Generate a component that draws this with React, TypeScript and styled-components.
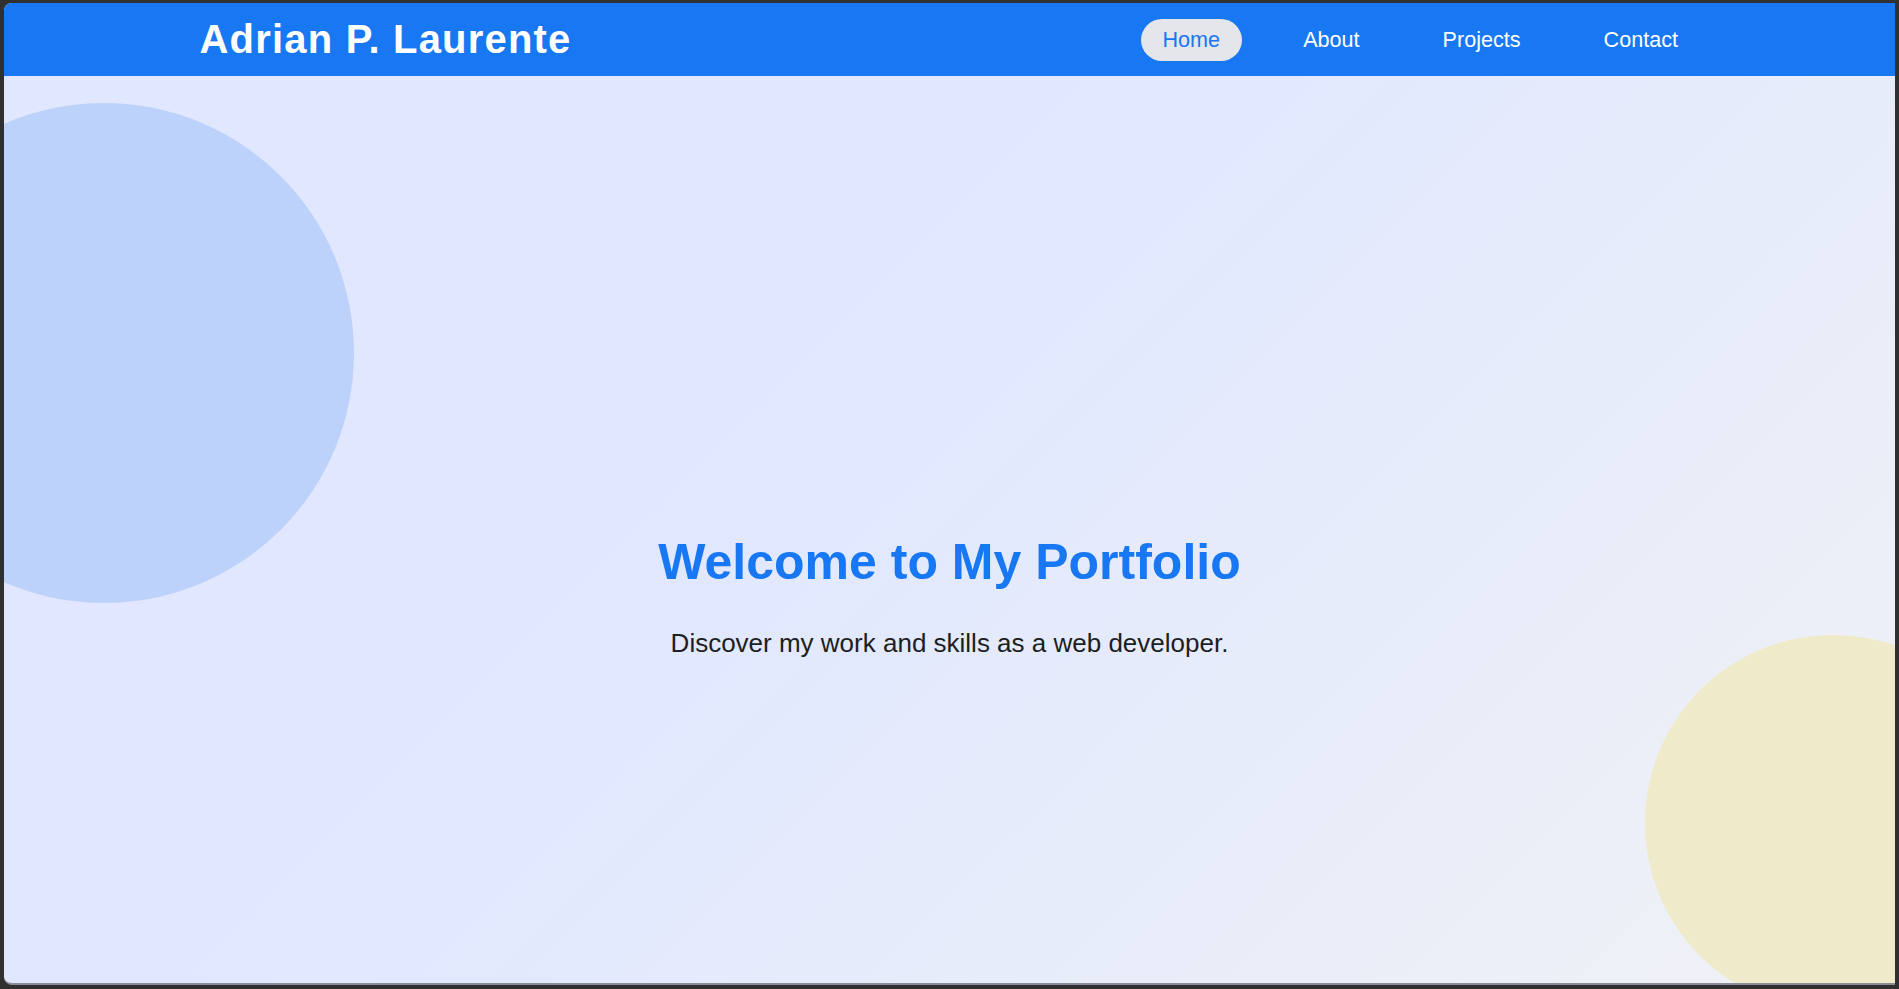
import React from "react";
import styled, { createGlobalStyle } from "styled-components";

const GlobalStyle = createGlobalStyle`
  html, body {
    margin: 0;
    padding: 0;
    background: #303030;
  }
  * { box-sizing: border-box; }
`;

const Frame = styled.div`
  height: 989px;
  padding: 3px 4px 4px 4px;
  display: flex;
  flex-direction: column;
  font-family: "Liberation Sans", Arial, sans-serif;
`;

const Window = styled.div`
  position: relative;
  flex: 1;
  display: flex;
  flex-direction: column;
  overflow: hidden;
  border-radius: 8px 0 0 8px;
  border-bottom: 2px solid #8a8c96;
  background: linear-gradient(135deg, #e0e7ff 0%, #e0e7ff 40%, #f0f2f5 100%);
`;

const Header = styled.header`
  position: relative;
  z-index: 2;
  height: 73px;
  flex: 0 0 73px;
  background: #1877f2;
  display: flex;
  align-items: center;
`;

const HeaderInner = styled.div`
  width: 100%;
  max-width: 1500px;
  margin: 0 auto;
  display: flex;
  align-items: center;
  justify-content: space-between;
`;

const Logo = styled.div`
  color: #ffffff;
  font-weight: 700;
  font-size: 40px;
  letter-spacing: 1.2px;
  line-height: normal;
`;

const Nav = styled.nav`
  display: flex;
  align-items: center;
  gap: 40px;
`;

const NavLink = styled.a<{ $active?: boolean }>`
  display: block;
  font-size: 21.6px;
  line-height: 24px;
  padding: 9px 21.5px;
  border-radius: 22px;
  text-decoration: none;
  cursor: pointer;
  color: ${(p) => (p.$active ? "#1877f2" : "#ffffff")};
  background: ${(p) => (p.$active ? "#e4e6eb" : "transparent")};
`;

const Circle = styled.div<{ $size: number; $color: string }>`
  position: absolute;
  width: ${(p) => p.$size}px;
  height: ${(p) => p.$size}px;
  border-radius: 50%;
  background: ${(p) => p.$color};
  z-index: 0;
`;

const BlueCircle = styled(Circle)`
  left: -150px;
  top: 100px;
`;

const YellowCircle = styled(Circle)`
  left: 1641px;
  top: 632px;
`;

const Hero = styled.section`
  position: relative;
  z-index: 1;
  flex: 1;
  display: flex;
  flex-direction: column;
  align-items: center;
  justify-content: center;
  padding-top: 133px;
  text-align: center;
`;

const Title = styled.h1`
  margin: 0 0 37px;
  font-size: 50px;
  font-weight: 700;
  line-height: normal;
  color: #1877f2;
`;

const Subtitle = styled.p`
  margin: 0;
  font-size: 26px;
  line-height: normal;
  color: #1c1e21;
`;

const links = ["Home", "About", "Projects", "Contact"];

export default function App() {
  return (
    <>
      <GlobalStyle />
      <Frame>
        <Window>
          <BlueCircle $size={500} $color="#bdd2fb" />
          <YellowCircle $size={376} $color="#efebca" />
          <Header>
            <HeaderInner>
              <Logo>Adrian P. Laurente</Logo>
              <Nav>
                {links.map((l, i) => (
                  <NavLink key={l} $active={i === 0}>
                    {l}
                  </NavLink>
                ))}
              </Nav>
            </HeaderInner>
          </Header>
          <Hero>
            <Title>Welcome to My Portfolio</Title>
            <Subtitle>Discover my work and skills as a web developer.</Subtitle>
          </Hero>
        </Window>
      </Frame>
    </>
  );
}
